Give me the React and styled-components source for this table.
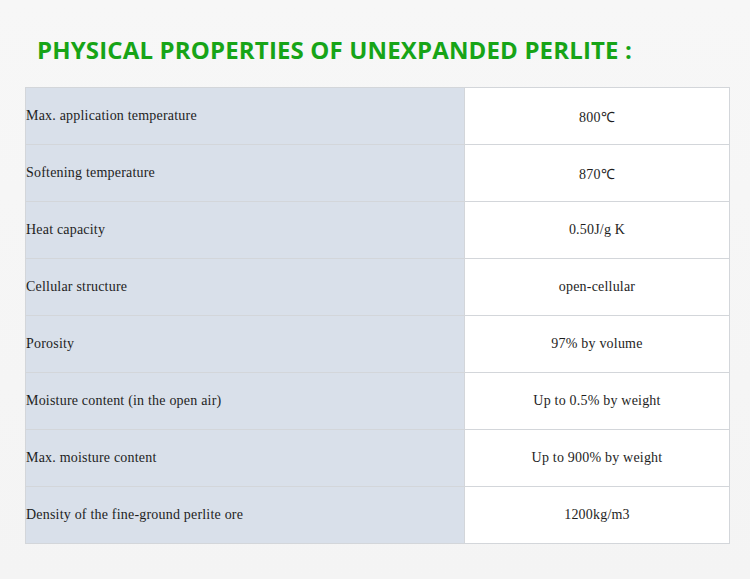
import { styled, createGlobalStyle } from "styled-components";

const GlobalStyle = createGlobalStyle`
    html, body {
        margin: 0;
        padding: 0;
        background: #f6f6f6;
    }
`

const Pagina = styled.section`
    width: 750px;
    height: 579px;
    box-sizing: border-box;
    padding: 35px 21px 0 25px;
    background: linear-gradient(180deg, #f7f7f7 0%, #f4f4f4 100%);

    h2 {
        margin: 0 0 22px 12px;
        font-family: "Open Sans", sans-serif;
        font-weight: 700;
        font-size: 24px;
        line-height: 30px;
        color: #17a417;
        letter-spacing: 0.15px;
        white-space: nowrap;
    }
`

const Tabela = styled.table`
    width: 705px;
    border-collapse: collapse;
    table-layout: fixed;
    font-family: "Liberation Serif", "Times New Roman", serif;
    font-size: 14px;
    letter-spacing: 0.2px;
    color: #1e1e1e;

    td {
        height: 56px;
        padding: 0;
        border: 1px solid #d3d6da;
    }
`

const Celula = styled.td`
    background: ${props => props.$rotulo ? "#d9e0ea" : "#ffffff"};
    text-align: ${props => props.$rotulo ? "left" : "center"};
    width: ${props => props.$rotulo ? "438px" : "auto"};
`

const propriedades = [
    ["Max. application temperature", "800℃"],
    ["Softening temperature", "870℃"],
    ["Heat capacity", "0.50J/g K"],
    ["Cellular structure", "open-cellular"],
    ["Porosity", "97% by volume"],
    ["Moisture content (in the open air)", "Up to 0.5% by weight"],
    ["Max. moisture content", "Up to 900% by weight"],
    ["Density of the fine-ground perlite ore", "1200kg/m3"],
]

function App() {
    return (
        <>
            <GlobalStyle />
            <Pagina>
                <h2>PHYSICAL PROPERTIES OF UNEXPANDED PERLITE :</h2>
                <Tabela>
                    <tbody>
                        {propriedades.map(([nome, valor]) => (
                            <tr key={nome}>
                                <Celula $rotulo>{nome}</Celula>
                                <Celula>{valor}</Celula>
                            </tr>
                        ))}
                    </tbody>
                </Tabela>
            </Pagina>
        </>
    )
}

export default App;
